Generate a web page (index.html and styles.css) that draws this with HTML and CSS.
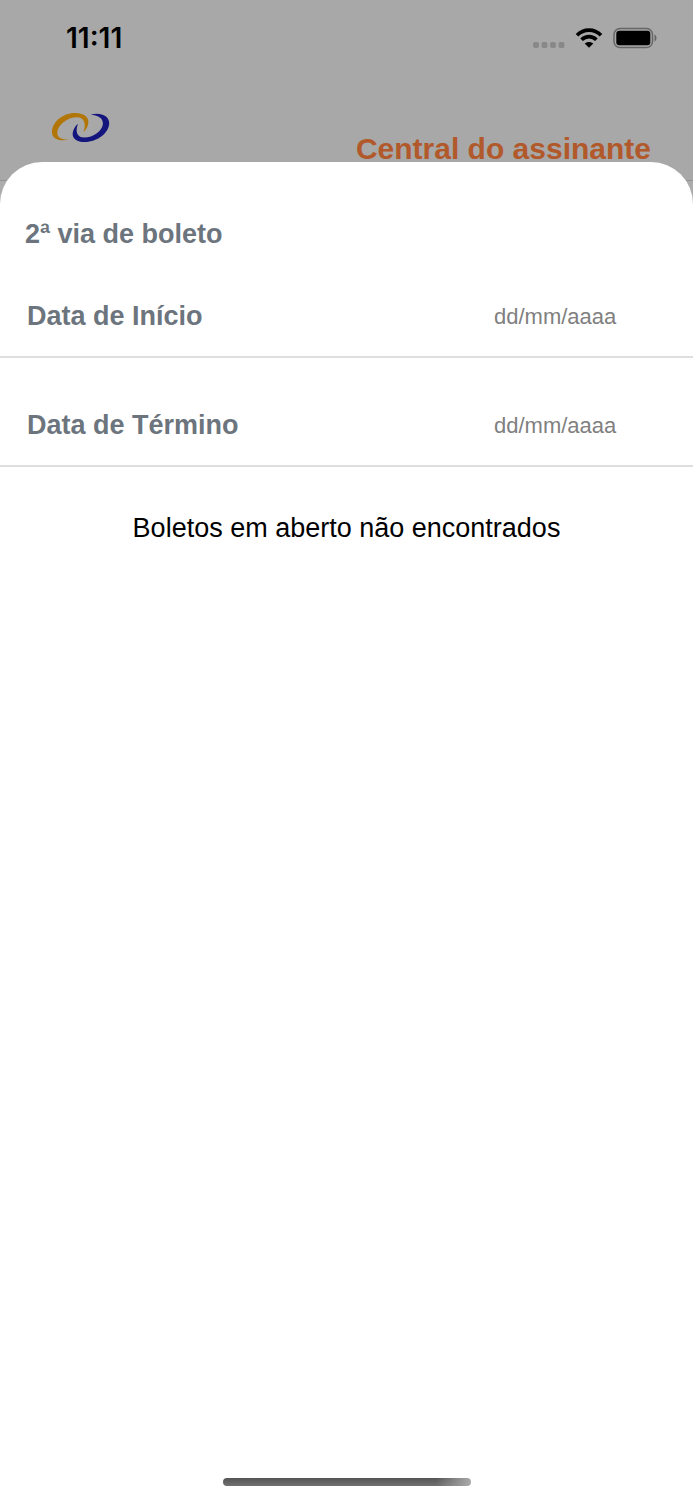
FILE: index.html
```html
<!DOCTYPE html>
<html lang="pt-BR">
<head>
<meta charset="utf-8">
<meta name="viewport" content="width=device-width, initial-scale=1">
<title>2ª via de boleto</title>
<link rel="stylesheet" href="styles.css">
</head>
<body>
<div class="screen">
  <div class="status">
    <time class="clock">11:11</time>
    <div class="indicators">
      <svg width="32" height="22" viewBox="0 0 32 22" fill="#888" aria-hidden="true"><rect y="15" width="6" height="6" rx="2"/><rect x="8.500" y="15" width="6" height="6" rx="2"/><rect x="17" y="15" width="6" height="6" rx="2"/><rect x="25.500" y="15" width="6" height="6" rx="2"/></svg>
      <svg width="28" height="22" viewBox="0 0 28 22" aria-hidden="true"><g fill="none" stroke="#000" stroke-width="3.7"><path d="M2 8.200C8.700 1.400 19.300 1.400 26 8.200"/><path d="M6.600 12.800C10.800 8.600 17.200 8.600 21.400 12.800"/></g><path d="M14 20.800L9.700 16.600C12 14.300 16 14.300 18.300 16.600Z"/></svg>
      <svg width="44" height="22" viewBox="0 0 44 22" aria-hidden="true"><rect x="1" y="1.500" width="38.500" height="19" rx="6" fill="none" stroke="#666" stroke-width="1.500"/><rect x="3.300" y="3.800" width="34" height="14.400" rx="3"/><path d="M41.500 7.500C44.200 8.800 44.200 13.200 41.500 14.500Z" fill="#666"/></svg>
    </div>
  </div>
  <header class="header">
    <svg class="logo" width="58" height="31" viewBox="0 0 58 31" aria-hidden="true"><path fill="#b27606" d="M18 27.300C8 29.800 0 27.500 0 20C0 10 11 1 22.500 1C33.500 1 38 6.500 36 13C35 16 33.500 18.500 31.300 20C33 16 33.500 12 31.500 8.500C30 5.800 27.500 5 24 5.200C14.500 5.700 5.500 13.500 5.300 20.700C5.200 25.500 10 28.200 18 27.300Z"/><path fill="#15157e" d="M38.500 2.700C48 -.2 57.200 3.500 57.200 11C57.200 21 45 30 33 30C22.500 30 18.800 24.500 21.500 18C22.500 15.500 24 13.200 26 12C23.200 18.500 24.500 25.500 32 25.600C41.500 25.600 50.500 18.500 50.900 12C51.200 6 46 3 38.500 2.700Z"/></svg>
    <h1 class="brand">Central do assinante</h1>
  </header>
  <main class="sheet">
    <h2 class="title">2ª via de boleto</h2>
    <form>
      <div class="field">
        <label for="inicio">Data de Início</label>
        <input id="inicio" type="text" inputmode="numeric" placeholder="dd/mm/aaaa">
      </div>
      <div class="field">
        <label for="termino">Data de Término</label>
        <input id="termino" type="text" inputmode="numeric" placeholder="dd/mm/aaaa">
      </div>
    </form>
    <p class="empty">Boletos em aberto não encontrados</p>
    <div class="home"></div>
  </main>
</div>
</body>
</html>
```
FILE: styles.css
```css
* {
  box-sizing: border-box;
}

body {
  margin: 0;
  font-family: "Liberation Sans", Arial, sans-serif;
}

.screen {
  display: flex;
  flex-direction: column;
  min-height: 100vh;
  background: #acacac;
}

.status {
  display: flex;
  justify-content: space-between;
  align-items: center;
  height: 76px;
  padding: 0 36px 0 66px;
  background: #a8a8a8;
}

.clock {
  font: 600 28px/32px Inter, sans-serif;
}

.indicators {
  display: flex;
  align-items: center;
  gap: 10px;
}

.header {
  display: flex;
  justify-content: space-between;
  align-items: flex-start;
  height: 105px;
  padding: 36px 42px 0 52px;
  background: #a8a8a8;
  border-bottom: 1px solid #939393;
}

.brand {
  margin: 20px 0 0;
  font-size: 30px;
  line-height: 34px;
  color: #b2592b;
}

.sheet {
  position: relative;
  display: flex;
  flex: 1;
  flex-direction: column;
  margin-top: -19px;
  padding-bottom: 14px;
  background: #fff;
  border-radius: 42px 42px 0 0;
}

.title {
  margin: 56px 25px 26px;
  font-size: 27px;
  line-height: 32px;
  color: #6c757d;
}

.field {
  display: flex;
  justify-content: space-between;
  align-items: center;
  height: 82px;
  padding: 0 27px;
  border-bottom: 2px solid #dfdfdf;
}

.field + .field {
  margin-top: 27px;
}

.field label {
  font-size: 27px;
  font-weight: 700;
  line-height: 32px;
  color: #6c757d;
}

.field input {
  width: 172px;
  padding: 2px 0 0;
  border: 0;
  outline: 0;
  background: transparent;
  font: 22px/32px "Liberation Sans", Arial, sans-serif;
  color: #333;
}

.field input::placeholder {
  color: #808080;
  opacity: 1;
}

.empty {
  margin: 45px 24px;
  font-size: 27px;
  line-height: 32px;
  text-align: center;
}

.home {
  align-self: center;
  width: 248px;
  height: 8px;
  margin-top: auto;
  border-radius: 4px;
  background: linear-gradient(90deg, transparent 86%, #aaa), linear-gradient(#555, #707070);
}
```
